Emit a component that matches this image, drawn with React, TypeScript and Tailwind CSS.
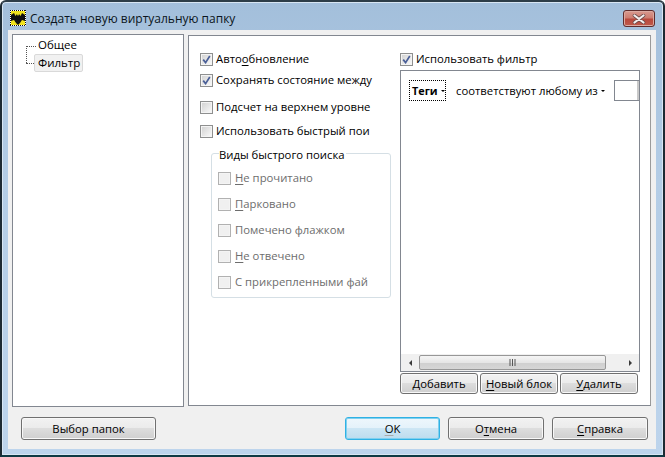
import React from "react";

const Check = ({ on, off }: { on?: boolean; off?: boolean }) => (
  <span className={`flex w-[13px] h-[13px] shrink-0 border p-px ${off ? "border-[#b1b1b1]" : "border-[#8e8f8f]"} bg-[#f4f4f4]`}>
    <span className={`relative flex flex-1 ${off ? "bg-[#f0f0f0]" : "bg-gradient-to-br from-[#d4d4d4] to-[#f7f7f7]"}`}>
      {on && (
        <svg viewBox="0 0 9 9" className="w-[9px] h-[9px]">
          <path d="M1.2 4.6 L3.6 7.6 L7.8 1" fill="none" stroke="#4a5f97" strokeWidth="1.7" />
        </svg>
      )}
    </span>
  </span>
);

const U = ({ children }: { children: React.ReactNode }) => <span className="underline underline-offset-2">{children}</span>;

const Row = ({ on, off, children, cls = "" }: { on?: boolean; off?: boolean; children: React.ReactNode; cls?: string }) => (
  <div className={`flex items-center h-[16px] whitespace-nowrap ${off ? "gap-[4px] text-[#6d6d6d]" : "gap-[3px] text-black"} ${cls}`}>
    <Check on={on} off={off} />
    <span>{children}</span>
  </div>
);

const Btn = ({ children, w, def }: { children: React.ReactNode; w: string; def?: boolean }) => (
  <div
    className={`${w} flex items-center justify-center rounded-[3px] border text-black ${
      def
        ? "border-[#2fb1e4] shadow-[inset_0_0_0_1px_#7fd0ef] bg-[linear-gradient(#eef7fc_0%,#e4f2fa_48%,#cde6f4_50%,#bcdcee_100%)]"
        : "border-[#707070] shadow-[inset_0_0_0_1px_#f8f8f8] bg-[linear-gradient(#f2f2f2_0%,#ebebeb_48%,#dddddd_50%,#cfcfcf_100%)]"
    }`}
  >
    <span>{children}</span>
  </div>
);

const Caret = () => <span className="w-0 h-0 border-x-[2px] border-x-transparent border-t-[2px] border-t-black" />;

export default function App() {
  return (
    <div className="w-[665px] h-[457px] bg-white overflow-hidden text-[11.3px] leading-[16px] text-black [font-family:'Open_Sans','Liberation_Sans',sans-serif]">
      <div className="w-full h-full flex flex-col rounded-t-[6px] border-2 border-[#1d2a33] border-b-[#0f3a44] border-t-[#2d3d48] bg-[linear-gradient(#a3bfdb_0%,#b4cde6_40%,#bdd4ec_100%)] pl-[6px] pr-[7px] pb-[6px] shadow-[inset_0_0_0_1px_#d8e6f3]">
        <div className="h-[28px] flex items-start shrink-0">
          <svg viewBox="0 0 16 16" className="w-[16px] h-[16px] mt-[8px] ml-[2px] shrink-0">
            <rect width="16" height="16" fill="#fff" />
            <rect x="1" y="1" width="14" height="14" fill="#f2e41c" />
            <path d="M1 5 L4 3 L5.5 6 L7 4 L7.5 5.5 L8.5 5.5 L9 4 L10.5 6 L12 3 L15 5 L15 11 L12 10 L10 13 L8 15 L6 13 L4 10 L1 11 Z" fill="#111" />
            <path d="M0 .5 H16 M0 15.5 H16 M.5 0 V16 M15.5 0 V16" stroke="#111" strokeWidth="1" strokeDasharray="1 1" />
          </svg>
          <span className="ml-[4px] mt-[9px] text-[12px] text-[#0b1520] whitespace-nowrap">Создать новую виртуальную папку</span>
          <div className="ml-auto mt-[8px] mr-[1px] w-[32px] h-[17px] rounded-[3px] border border-[#5f2c2c] shadow-[inset_0_0_0_1px_#dba9a0] bg-[linear-gradient(#d99a8f_0%,#cd7d71_45%,#b9483c_55%,#bf5a4b_100%)] flex items-center justify-center">
            <svg viewBox="0 0 14 10" className="w-[14px] h-[10px]">
              <path d="M2.5 1.5 L11.5 8.5 M11.5 1.5 L2.5 8.5" stroke="#6b4a48" strokeWidth="3.6" strokeLinecap="round" />
              <path d="M2.5 1.5 L11.5 8.5 M11.5 1.5 L2.5 8.5" stroke="#f3eeee" strokeWidth="2.2" strokeLinecap="round" />
            </svg>
          </div>
        </div>

        <div className="flex-1 flex flex-col bg-[#f0f0f0] pt-[4px] px-[4px] min-h-0">
          <div className="h-[373px] flex gap-[4px] shrink-0">
            <div className="w-[172px] bg-white border border-[#828790] pl-[13px] pt-[1px]">
              <div className="relative pl-[12px] text-[11.5px]">
                <div className="absolute left-[0px] top-[10px] h-[17px] w-[10px] border-l border-t border-dotted border-[#555]" />
                <div className="absolute left-[0px] top-[27px] w-[8px] border-t border-dotted border-[#555]" />
                <div className="h-[18px] flex items-center">Общее</div>
                <div className="relative w-[49px] h-[18px] pl-[3px] -ml-[4px] flex items-center rounded-[2px] border border-[#d9d9d9] bg-[#f1f1f1]">Фильтр</div>
              </div>
            </div>

            <div className="flex-1 mt-[1px] mb-[1px] bg-white border border-[#828790] border-r-[#9a9a9a] flex pl-[11px] mr-[1px]">
              <div className="w-[200px] shrink-0 pt-[15px] flex flex-col">
                <Row on>Авто<U>о</U>бновление</Row>
                <Row on cls="mt-[5px]">Сохранять состояние между</Row>
                <Row cls="mt-[11px]">Подсчет на верхнем уровне</Row>
                <Row cls="mt-[8px]">Использовать быстрый пои</Row>
                <div className="relative mt-[14px] ml-[11px] w-[180px] h-[145px] border border-[#d5dfe5] rounded-[3px] pl-[6px] pt-[16px] flex flex-col gap-[10px]">
                  <div className="absolute left-[7px] top-[-7px] bg-white pr-[1px] leading-[16px] whitespace-nowrap">Виды быстрого поиска</div>
                  <Row off><U>Н</U>е прочитано</Row>
                  <Row off><U>П</U>арковано</Row>
                  <Row off>Помечено флажком</Row>
                  <Row off><U>Н</U>е отвечено</Row>
                  <Row off>С прикрепленными фай</Row>
                </div>
              </div>
              <div className="w-[240px] shrink-0 pt-[15px] flex flex-col">
                <Row on>Использовать фильтр</Row>
                <div className="mt-[3px] h-[302px] border border-[#828790] bg-white flex flex-col overflow-hidden">
                  <div className="flex-1 flex items-start pt-[9px] pl-[8px] whitespace-nowrap">
                    <div className="h-[21px] w-[37px] pl-[2px] flex items-center gap-[3px] border border-dotted border-black font-bold text-[10.8px]">
                      <span>Теги</span>
                      <Caret />
                    </div>
                    <div className="h-[21px] ml-[10px] flex items-center gap-[3px]">
                      <span>соответствуют любому из</span>
                      <Caret />
                    </div>
                    <div className="ml-auto w-[25px] h-[21px] border border-r-0 border-[#828790] flex justify-end">
                      <span className="w-[2px] h-full bg-[#c9c9c9]" />
                    </div>
                  </div>
                  <div className="h-[17px] shrink-0 bg-[#f0f0f0] flex items-center">
                    <div className="w-[18px] flex justify-center">
                      <span className="w-0 h-0 border-y-[3px] border-y-transparent border-r-[3px] border-r-[#3a3a3a]" />
                    </div>
                    <div className="w-[187px] h-[15px] rounded-[2px] border border-[#979797] bg-[linear-gradient(#f5f5f5_0%,#e6e6e6_50%,#cfcfcf_51%,#d6d6d6_100%)] flex items-center justify-center">
                      <svg viewBox="0 0 8 7" className="w-[8px] h-[7px]">
                        <path d="M1 0V7M3.5 0V7M6 0V7" stroke="#555" strokeWidth="1" />
                      </svg>
                    </div>
                    <div className="flex-1 flex justify-end pr-[7px]">
                      <span className="w-0 h-0 border-y-[3px] border-y-transparent border-l-[3px] border-l-[#3a3a3a]" />
                    </div>
                  </div>
                </div>
                <div className="flex gap-[2px] h-[21px] mt-[1px]">
                  <Btn w="w-[78px]"><U>Д</U>обавить</Btn>
                  <Btn w="w-[78px]"><U>Н</U>овый блок</Btn>
                  <Btn w="w-[78px]"><U>У</U>далить</Btn>
                </div>
              </div>
            </div>
          </div>

          <div className="flex h-[23px] mt-[10px] pl-[9px] pr-[4px]">
            <Btn w="w-[135px]">Выбор папок</Btn>
            <div className="ml-auto flex gap-[8px]">
              <Btn w="w-[95px]" def><span className="underline decoration-[#a9a9a9] underline-offset-2">O</span>K</Btn>
              <Btn w="w-[96px]">О<U>т</U>мена</Btn>
              <Btn w="w-[96px]"><U>С</U>правка</Btn>
            </div>
          </div>
        </div>
      </div>
    </div>
  );
}
